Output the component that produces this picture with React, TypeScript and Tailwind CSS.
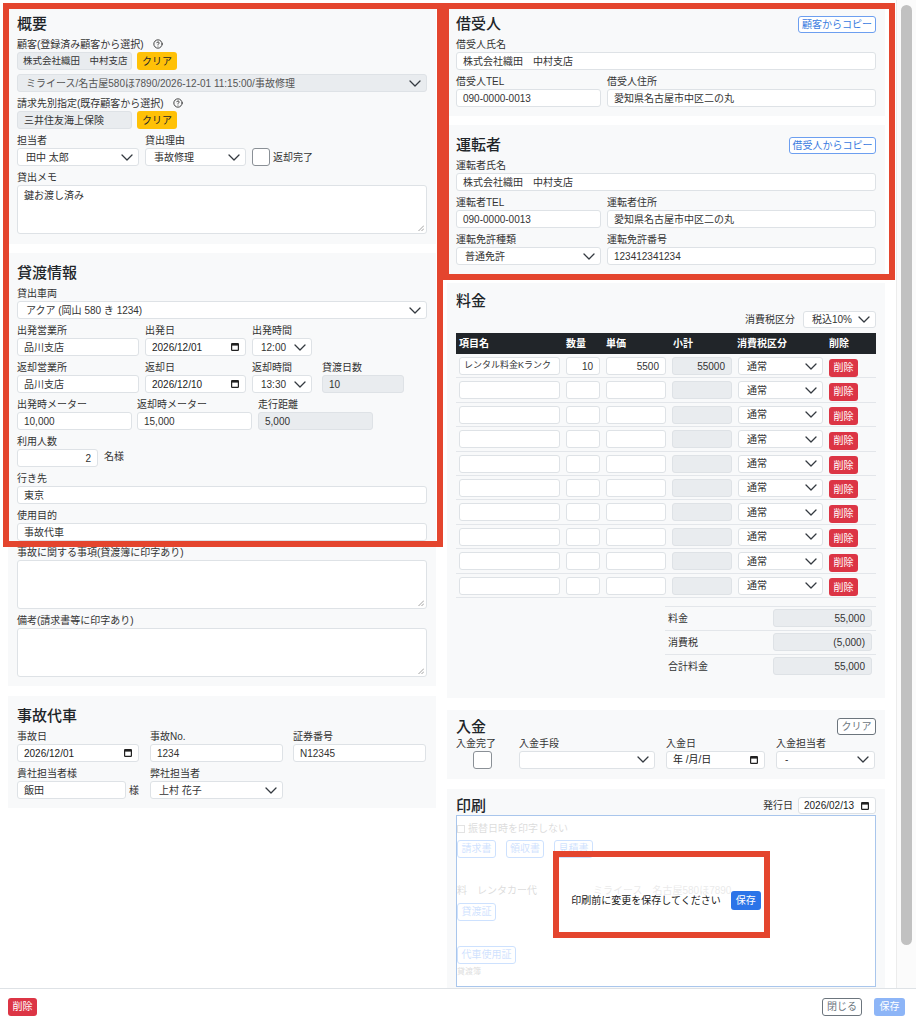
import { ReactNode } from "react";
import { CircleHelp } from "lucide-react";

type Kids = { children?: ReactNode; className?: string };

function Chevron() {
  return (
    <svg width="12" height="7" viewBox="0 0 12 7" fill="none" stroke="#343a40" strokeWidth="1.3" strokeLinecap="round" strokeLinejoin="round" className="shrink-0">
      <path d="M1 1l5 5 5-5" />
    </svg>
  );
}

function CalendarIcon() {
  return (
    <svg width="8" height="8" viewBox="0 0 8 8" className="shrink-0">
      <rect x="0.6" y="0.6" width="6.8" height="6.8" rx="0.6" fill="none" stroke="#222" strokeWidth="1.2" />
      <rect x="0.6" y="0.6" width="6.8" height="2" fill="#222" />
    </svg>
  );
}

function Help() {
  return <CircleHelp size={10} strokeWidth={2} className="inline-block ml-[9px] -mt-[2px] text-[#222]" />;
}

function Label({ children, className = "" }: Kids) {
  return <div className={`text-[10px] leading-[15px] text-[#333] whitespace-nowrap ${className}`}>{children}</div>;
}

function Field({ label, children, className = "" }: Kids & { label: ReactNode }) {
  return (
    <div className={className}>
      <Label>{label}</Label>
      {children}
    </div>
  );
}

function Box({ children, className = "", gray = false, right = false }: Kids & { gray?: boolean; right?: boolean }) {
  return (
    <div
      className={`h-[18px] rounded-[3px] border border-[#dee2e6] px-[6px] flex items-center text-[10px] text-[#333] whitespace-nowrap overflow-hidden ${
        gray ? "bg-[#e9ecef]" : "bg-white"
      } ${right ? "justify-end" : ""} ${className}`}
    >
      {children}
    </div>
  );
}

function Select({ children, className = "", gray = false }: Kids & { gray?: boolean }) {
  return (
    <div
      className={`h-[18px] rounded-[3px] border border-[#dee2e6] pl-[8px] pr-[5px] flex items-center justify-between text-[10px] whitespace-nowrap overflow-hidden ${
        gray ? "bg-[#e9ecef] text-[#555]" : "bg-white text-[#333]"
      } ${className}`}
    >
      <span>{children}</span>
      <Chevron />
    </div>
  );
}

function DateBox({ children, className = "" }: Kids) {
  return (
    <div className={`h-[18px] rounded-[3px] border border-[#dee2e6] bg-white pl-[6px] pr-[6px] flex items-center justify-between text-[10px] text-[#222] whitespace-nowrap ${className}`}>
      <span>{children}</span>
      <CalendarIcon />
    </div>
  );
}

function TextArea({ children }: Kids) {
  return (
    <div className="relative h-[49px] rounded-[3px] border border-[#dee2e6] bg-white px-[6px] pt-[3px] text-[10px] leading-[14px] text-[#333]">
      {children}
      <svg width="6" height="6" viewBox="0 0 6 6" className="absolute right-[2px] bottom-[2px]" stroke="#888" strokeWidth="0.8">
        <path d="M6 0.5L0.5 6M6 3.5L3.5 6" />
      </svg>
    </div>
  );
}

function Checkbox({ className = "" }: Kids) {
  return <div className={`h-[18px] w-[18px] rounded-[3px] border border-[#8a9096] bg-white shrink-0 ${className}`} />;
}

function YellowBtn({ children }: Kids) {
  return (
    <button type="button" className="h-[18px] w-[40px] rounded-[3px] bg-[#ffc107] text-[10px] text-[#212529]">
      {children}
    </button>
  );
}

function OutlineBtn({ children, className = "" }: Kids) {
  return (
    <button type="button" className={`h-[17px] rounded-[3px] border border-[#6d9ff0] bg-white text-[10px] text-[#3a7be0] ${className}`}>
      {children}
    </button>
  );
}

function DangerBtn({ children }: Kids) {
  return (
    <button type="button" className="h-[18px] w-[29px] rounded-[3px] bg-[#dc3545] text-[10px] text-white">
      {children}
    </button>
  );
}

function Card({ children, className = "" }: Kids) {
  return <section className={`bg-[#f8f9fa] px-[9px] ${className}`}>{children}</section>;
}

function Title({ children, className = "" }: Kids) {
  return <h2 className={`text-[15px] font-medium text-[#212529] ${className}`}>{children}</h2>;
}

const cols = "grid grid-cols-[107px_40px_66px_66px_91px_50px]";

const chargeRows = [
  { name: "レンタル料金Kランク", qty: "10", price: "5500", sub: "55000" },
  ...Array.from({ length: 9 }, () => ({ name: "", qty: "", price: "", sub: "" })),
];

function Overview() {
  return (
    <Card className="pt-[8px] pb-[10px]">
      <Title className="leading-[24px] mb-[1px]">概要</Title>
      <div className="flex flex-col gap-[4px]">
        <div>
          <Label>
            顧客(登録済み顧客から選択)
            <Help />
          </Label>
          <div className="flex gap-[5px]">
            <Box gray className="w-[115px] !px-[5px] !text-[9.5px]">株式会社織田　中村支店</Box>
            <YellowBtn>クリア</YellowBtn>
          </div>
        </div>
        <Select gray>ミライース/名古屋580ほ7890/2026-12-01 11:15:00/事故修理</Select>
        <div>
          <Label>
            請求先別指定(既存顧客から選択)
            <Help />
          </Label>
          <div className="flex gap-[5px]">
            <Box gray className="w-[115px]">三井住友海上保険</Box>
            <YellowBtn>クリア</YellowBtn>
          </div>
        </div>
        <div className="flex items-end">
          <Field label="担当者" className="w-[122px]">
            <Select>田中 太郎</Select>
          </Field>
          <Field label="貸出理由" className="w-[101px] ml-[6px]">
            <Select>事故修理</Select>
          </Field>
          <div className="flex items-center h-[18px] ml-[6px]">
            <Checkbox />
            <span className="ml-[3px] text-[10px]">返却完了</span>
          </div>
        </div>
        <Field label="貸出メモ">
          <TextArea>鍵お渡し済み</TextArea>
        </Field>
      </div>
    </Card>
  );
}

function Rental() {
  return (
    <Card className="mt-[9px] pt-[8px] pb-[9px]">
      <Title className="leading-[24px] mb-[1px]">貸渡情報</Title>
      <div className="flex flex-col gap-[4px]">
        <Field label="貸出車両">
          <Select>アクア (岡山 580 き 1234)</Select>
        </Field>
        <div className="flex">
          <Field label="出発営業所" className="w-[122px]">
            <Box>品川支店</Box>
          </Field>
          <Field label="出発日" className="w-[101px] ml-[6px]">
            <DateBox>2026/12/01</DateBox>
          </Field>
          <Field label="出発時間" className="w-[60px] ml-[6px]">
            <Select>12:00</Select>
          </Field>
        </div>
        <div className="flex">
          <Field label="返却営業所" className="w-[122px]">
            <Box>品川支店</Box>
          </Field>
          <Field label="返却日" className="w-[101px] ml-[6px]">
            <DateBox>2026/12/10</DateBox>
          </Field>
          <Field label="返却時間" className="w-[60px] ml-[6px]">
            <Select>13:30</Select>
          </Field>
          <Field label="貸渡日数" className="w-[82px] ml-[10px]">
            <Box gray>10</Box>
          </Field>
        </div>
        <div className="flex">
          <Field label="出発時メーター" className="w-[115px]">
            <Box>10,000</Box>
          </Field>
          <Field label="返却時メーター" className="w-[115px] ml-[5px]">
            <Box>15,000</Box>
          </Field>
          <Field label="走行距離" className="w-[115px] ml-[6px]">
            <Box gray>5,000</Box>
          </Field>
        </div>
        <Field label="利用人数">
          <div className="flex items-center">
            <Box right className="w-[81px]">2</Box>
            <span className="ml-[6px] -mt-[3px] text-[10px]">名様</span>
          </div>
        </Field>
        <Field label="行き先">
          <Box>東京</Box>
        </Field>
        <Field label="使用目的">
          <Box>事故代車</Box>
        </Field>
        <Field label="事故に関する事項(貸渡簿に印字あり)">
          <TextArea />
        </Field>
        <Field label="備考(請求書等に印字あり)">
          <TextArea />
        </Field>
      </div>
    </Card>
  );
}

function Accident() {
  return (
    <Card className="mt-[10px] pt-[8px] pb-[9px]">
      <Title className="leading-[24px] mb-[1px]">事故代車</Title>
      <div className="flex flex-col gap-[4px]">
        <div className="flex">
          <Field label="事故日" className="w-[122px]">
            <DateBox>2026/12/01</DateBox>
          </Field>
          <Field label="事故No." className="w-[133px] ml-[11px]">
            <Box>1234</Box>
          </Field>
          <Field label="証券番号" className="w-[133px] ml-[10px]">
            <Box>N12345</Box>
          </Field>
        </div>
        <div className="flex">
          <Field label="貴社担当者様" className="w-[122px]">
            <div className="flex items-center">
              <Box className="w-[110px]">飯田</Box>
              <span className="ml-[3px] text-[10px]">様</span>
            </div>
          </Field>
          <Field label="弊社担当者" className="w-[133px] ml-[11px]">
            <Select>上村 花子</Select>
          </Field>
        </div>
      </div>
    </Card>
  );
}

function Borrower() {
  return (
    <Card className="pt-[8px] pb-[9px]">
      <div className="flex items-center justify-between h-[24px] mb-[1px]">
        <Title className="leading-[24px]">借受人</Title>
        <OutlineBtn className="w-[78px]">顧客からコピー</OutlineBtn>
      </div>
      <div className="flex flex-col gap-[4px]">
        <Field label="借受人氏名">
          <Box>株式会社織田　中村支店</Box>
        </Field>
        <div className="flex gap-[6px]">
          <Field label="借受人TEL" className="w-[145px]">
            <Box>090-0000-0013</Box>
          </Field>
          <Field label="借受人住所" className="flex-1">
            <Box>愛知県名古屋市中区二の丸</Box>
          </Field>
        </div>
      </div>
    </Card>
  );
}

function Driver() {
  return (
    <Card className="mt-[9px] pt-[8px] pb-[9px]">
      <div className="flex items-center justify-between h-[24px] mb-[1px]">
        <Title className="leading-[24px]">運転者</Title>
        <OutlineBtn className="w-[87px]">借受人からコピー</OutlineBtn>
      </div>
      <div className="flex flex-col gap-[4px]">
        <Field label="運転者氏名">
          <Box>株式会社織田　中村支店</Box>
        </Field>
        <div className="flex gap-[6px]">
          <Field label="運転者TEL" className="w-[145px]">
            <Box>090-0000-0013</Box>
          </Field>
          <Field label="運転者住所" className="flex-1">
            <Box>愛知県名古屋市中区二の丸</Box>
          </Field>
        </div>
        <div className="flex gap-[6px]">
          <Field label="運転免許種類" className="w-[145px]">
            <Select>普通免許</Select>
          </Field>
          <Field label="運転免許番号" className="flex-1">
            <Box>123412341234</Box>
          </Field>
        </div>
      </div>
    </Card>
  );
}

function Charges() {
  const totals = [
    ["料金", "55,000"],
    ["消費税", "(5,000)"],
    ["合計料金", "55,000"],
  ];
  return (
    <Card className="mt-[9px] pt-[8px] pb-[20px]">
      <Title className="leading-[20px]">料金</Title>
      <div className="flex justify-end items-center h-[17px]">
        <span className="mr-[8px] text-[10px]">消費税区分</span>
        <Select className="w-[73px] !h-[17px]">税込10%</Select>
      </div>
      <div className="mt-[5px]">
        <div className={`${cols} h-[21px] items-center bg-[#212529] text-[10px] font-bold text-white`}>
          <span className="pl-[3px]">項目名</span>
          <span className="pl-[3px]">数量</span>
          <span className="pl-[3px]">単価</span>
          <span className="pl-[4px]">小計</span>
          <span className="pl-[2px]">消費税区分</span>
          <span className="pl-[3px]">削除</span>
        </div>
        {chargeRows.map((r, i) => (
          <div key={i} className={`${cols} h-[24.4px] items-center border-b border-[#e3e6ea]`}>
            <div className="px-[3px]">
              <Box className="!px-[4px] !text-[9px]">{r.name}</Box>
            </div>
            <div className="px-[3px]">
              <Box right>{r.qty}</Box>
            </div>
            <div className="px-[3px]">
              <Box right>{r.price}</Box>
            </div>
            <div className="px-[3px]">
              <Box gray right>{r.sub}</Box>
            </div>
            <div className="px-[3px]">
              <Select>通常</Select>
            </div>
            <div className="px-[3px]">
              <DangerBtn>削除</DangerBtn>
            </div>
          </div>
        ))}
      </div>
      <div className="mt-[8px] flex justify-end">
        <div className="w-[211px]">
          {totals.map(([k, v]) => (
            <div key={k} className="h-[24px] flex items-center justify-between border-t border-[#e3e6ea]">
              <span className="pl-[3px] text-[10px]">{k}</span>
              <Box gray right className="w-[99px] mr-[4px]">
                {v}
              </Box>
            </div>
          ))}
        </div>
      </div>
    </Card>
  );
}

function Payment() {
  return (
    <Card className="mt-[12px] pt-[8px] pb-[10px]">
      <div className="flex items-center justify-between h-[18px]">
        <Title className="leading-[18px]">入金</Title>
        <button type="button" className="h-[17px] w-[39px] rounded-[3px] border border-[#6c757d] bg-white text-[10px] text-[#6c757d]">
          クリア
        </button>
      </div>
      <div className="flex">
        <div className="w-[53px]">
          <Label>入金完了</Label>
          <Checkbox className="ml-[17px] !w-[19px]" />
        </div>
        <Field label="入金手段" className="w-[136px] ml-[10px]">
          <Select />
        </Field>
        <Field label="入金日" className="w-[99px] ml-[11px]">
          <DateBox>年 /月/日</DateBox>
        </Field>
        <Field label="入金担当者" className="w-[99px] ml-[11px]">
          <Select>-</Select>
        </Field>
      </div>
    </Card>
  );
}

function FadedBtn({ children, className = "" }: Kids) {
  return (
    <span className={`h-[18px] rounded-[3px] border border-[#0d6efd] text-[#0d6efd] flex items-center justify-center whitespace-nowrap ${className}`}>{children}</span>
  );
}

function Print() {
  return (
    <Card className="mt-[10px] pt-[9px] pb-[20px]">
      <div className="flex items-center justify-between h-[16px]">
        <Title className="leading-[16px]">印刷</Title>
        <div className="flex items-center">
          <span className="text-[10px] mr-[5px]">発行日</span>
          <DateBox className="w-[78px] !h-[17px] !pl-[5px]">2026/02/13</DateBox>
        </div>
      </div>
      <div className="relative mt-[1px] h-[172px] border border-[#a9c6ec] bg-white overflow-hidden">
        <div className="opacity-20 text-[10px] text-[#555] whitespace-nowrap">
          <div className="mt-[7px] h-[12px] flex items-center">
            <span className="h-[8px] w-[8px] border border-[#777] mr-[3px]" />
            振替日時を印字しない
          </div>
          <div className="mt-[5px] flex gap-[10px]">
            <FadedBtn className="w-[39px]">請求書</FadedBtn>
            <FadedBtn className="w-[38px]">領収書</FadedBtn>
            <FadedBtn className="w-[39px]">見積書</FadedBtn>
          </div>
          <div className="mt-[27px] h-[12px] flex items-center">
            <span>料　レンタカー代</span>
            <span className="ml-[56px] opacity-60">ミライース　名古屋580ほ7890</span>
          </div>
          <div className="mt-[6px] flex">
            <FadedBtn className="w-[39px]">貸渡証</FadedBtn>
          </div>
          <div className="mt-[25px] flex">
            <FadedBtn className="w-[59px]">代車使用証</FadedBtn>
          </div>
          <div className="mt-[2px] text-[8px]">貸渡簿</div>
        </div>
        <div className="absolute inset-0 flex items-center justify-center">
          <span className="text-[10px] text-[#222]">印刷前に変更を保存してください</span>
          <button type="button" className="ml-[10px] h-[19px] w-[30px] rounded-[3px] bg-[#2c74e8] text-[10px] text-white">
            保存
          </button>
        </div>
      </div>
    </Card>
  );
}

export default function App() {
  return (
    <div className="relative w-[916px] h-[1024px] overflow-hidden bg-white text-[#333] font-['Liberation_Sans','Noto_Sans_CJK_JP',sans-serif]">
      <div className="flex h-[988px]">
        <div className="flex-1 overflow-hidden">
          <div className="flex gap-[11px] pl-[8px] pt-[4px]">
            <div className="w-[428px] flex flex-col">
              <Overview />
              <Rental />
              <Accident />
            </div>
            <div className="w-[438px] flex flex-col">
              <Borrower />
              <Driver />
              <Charges />
              <Payment />
              <Print />
            </div>
          </div>
        </div>
        <div className="w-[20px] border-l border-[#ececec] bg-[#fbfbfb] pt-[5px] pl-[4px]">
          <div className="h-[940px] w-[11px] rounded-full bg-[#c1c1c1]" />
        </div>
      </div>
      <footer className="h-[36px] border-t border-[#dee2e6] flex items-center justify-between pl-[8px] pr-[11px]">
        <DangerBtn>削除</DangerBtn>
        <div className="flex gap-[12px]">
          <button type="button" className="h-[18px] w-[40px] rounded-[3px] border border-[#6c757d] bg-white text-[10px] text-[#6c757d]">
            閉じる
          </button>
          <button type="button" className="h-[18px] w-[31px] rounded-[3px] bg-[#8db5f7] text-[10px] text-white">
            保存
          </button>
        </div>
      </footer>

      {/* annotation frames drawn over the form */}
      <div className="pointer-events-none absolute left-[3px] top-[3px] w-[440px] h-[544px] border-[6px] border-[#e4452e]" />
      <div className="pointer-events-none absolute left-[443px] top-[3px] w-[452px] h-[277px] border-[6px] border-[#e4452e]" />
      <div className="pointer-events-none absolute left-[553px] top-[851px] w-[217px] h-[87px] border-[6px] border-[#e4452e]" />
    </div>
  );
}
